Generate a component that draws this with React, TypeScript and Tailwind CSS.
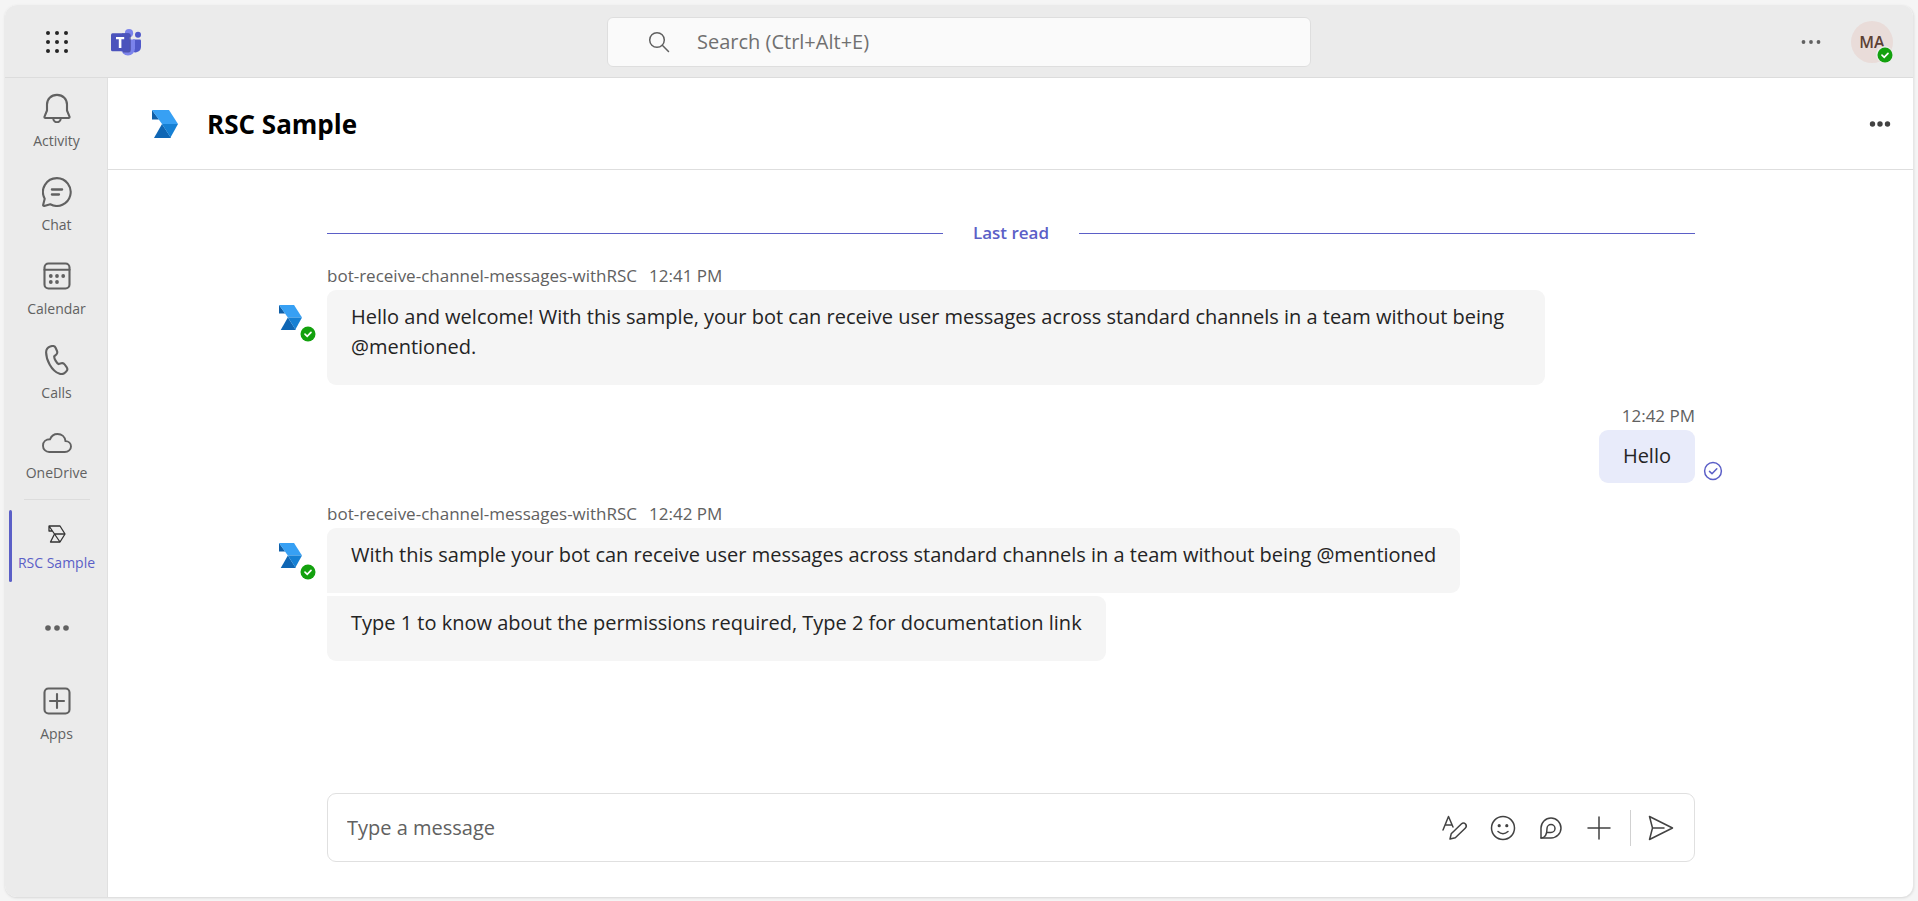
import type { ReactNode } from "react";

const font = "font-['Open_Sans','Noto_Sans',sans-serif]";

function BotLogo({ small = false }: { small?: boolean }) {
  return (
    <svg width={small ? 23 : 26} height={small ? 25 : 28} viewBox="0 0 26 28" aria-hidden="true">
      <path d="M0 0L7 9.500H0Z" fill="#0f5fa8" />
      <path d="M0 0H17L26 14H10Z" fill="#37a0f4" />
      <path d="M10 14L19 28H2Z" fill="#0f66b4" />
      <path d="M10 14H26L18.500 27.500Z" fill="#1680d4" />
    </svg>
  );
}

function TeamsLogo() {
  return (
    <svg width="30" height="27" viewBox="0 0 30 27" aria-hidden="true">
      <circle cx="27" cy="5.800" r="3" fill="#5059c9" />
      <path d="M22 10.500H29Q30 10.500 30 11.500V18A5.500 5.500 0 0 1 22 22.800Z" fill="#5059c9" />
      <circle cx="18" cy="4.200" r="4.100" fill="#7b83eb" />
      <path d="M10 10.500H24V19.500A7 7 0 0 1 10 19.500Z" fill="#7b83eb" />
      <path d="M11 4.300H17.500Q19.800 4.300 19.800 6.500V21Q19.800 23.500 17.500 23.500H12Z" fill="#383c8c" opacity="0.65" />
      <rect y="4.300" width="18.500" height="18" rx="1.500" fill="#4b53bc" />
      <path d="M5 8H13.200V10.200H10.400V19H7.800V10.200H5Z" fill="#fff" />
    </svg>
  );
}

function Presence() {
  return (
    <svg width="16" height="16" viewBox="0 0 16 16" role="img" aria-label="Available">
      <circle cx="8" cy="8" r="7.500" fill="#13a10e" />
      <path d="M5 8.200L7.200 10.300L11 6.300" fill="none" stroke="#fff" strokeWidth="1.700" strokeLinecap="round" />
    </svg>
  );
}

function Dots({ gap, r }: { gap: number; r: number }) {
  return (
    <svg width="30" height="12" viewBox="0 0 30 12" fill="currentColor" aria-hidden="true">
      <circle cx={15 - gap} cy="6" r={r} />
      <circle cx="15" cy="6" r={r} />
      <circle cx={15 + gap} cy="6" r={r} />
    </svg>
  );
}

function Icon({ children, stroke = 2.1 }: { children: ReactNode; stroke?: number }) {
  return (
    <svg
      width="30"
      height="30"
      viewBox="0 0 30 30"
      fill="none"
      stroke="currentColor"
      strokeWidth={stroke}
      strokeLinejoin="round"
      strokeLinecap="round"
      aria-hidden="true"
    >
      {children}
    </svg>
  );
}

function RailItem({ label, children }: { label: string; children: ReactNode }) {
  return (
    <button type="button" className="flex w-full flex-col items-center gap-2 text-sm leading-5 text-[#616161]">
      {children}
      <span>{label}</span>
    </button>
  );
}

function Rail() {
  return (
    <nav className="flex w-[103px] shrink-0 flex-col border-r border-[#e0e0e0] bg-[#ebebeb] pl-px pt-[15px]">
      <div className="flex flex-col gap-[26px]">
        <RailItem label="Activity">
          <Icon>
            <path d="M15 1.900C8.900 1.900 5 6.200 5 11.500V17.500L2.500 23.600Q2.100 25 3.500 25H26.500Q27.900 25 27.500 23.600L25 17.500V11.500C25 6.200 21.100 1.900 15 1.900Z" />
            <path d="M11.300 25.500A3.700 3.700 0 0 0 18.700 25.500" />
          </Icon>
        </RailItem>
        <RailItem label="Chat">
          <Icon>
            <path d="M15 1.100A13.900 13.900 0 1 1 8.300 27.300L2.200 28.900Q.9 29 1.200 27.700L2.700 21.700A13.900 13.900 0 0 1 15 1.100Z" />
            <path d="M9.900 12.500H20.100M9.900 17.500H17" strokeWidth="2.300" />
          </Icon>
        </RailItem>
        <RailItem label="Calendar">
          <Icon>
            <rect x="2.500" y="2.500" width="25" height="25" rx="4" />
            <path d="M2.500 8.800H27.500" />
            <g fill="currentColor" stroke="none">
              <circle cx="8.800" cy="15" r="1.900" />
              <circle cx="15" cy="15" r="1.900" />
              <circle cx="21.200" cy="15" r="1.900" />
              <circle cx="8.800" cy="21" r="1.900" />
              <circle cx="15" cy="21" r="1.900" />
            </g>
          </Icon>
        </RailItem>
        <RailItem label="Calls">
          <Icon>
            <path d="M8.200 1.600L10 1.100C11.700 .7 13 1.400 13.700 3L15 6C15.500 7.200 15.200 8.600 14.300 9.500L12.200 11.400C12 13.500 14.600 18 16.600 19.100L19.300 18.300C20.600 17.900 21.900 18.400 22.700 19.500L24.600 22.100C25.600 23.500 25.500 25.300 24.200 26.500L22.900 27.700C21.500 29 19.500 29.400 17.700 28.800C9.300 26 4.100 14.500 4.100 7.300C4.200 4.600 5.600 2.400 8.200 1.600Z" />
          </Icon>
        </RailItem>
      </div>
      <div className="mt-7">
        <RailItem label="OneDrive">
          <svg width="30" height="24" viewBox="0 1 30 24" fill="none" stroke="currentColor" strokeWidth="1.900" aria-hidden="true">
            <path d="M7.200 22H22.800C26.300 22 29 19.500 29 16.500C29 13.500 26.500 11.200 23.500 11.100C23 7 19.800 4 15.500 4C12 4 9.300 6.100 8 9.300C4 9.300 1 11.900 1 15.700C1 19.300 3.700 22 7.200 22Z" />
          </svg>
        </RailItem>
      </div>
      <div className="mx-auto mt-4 h-px w-[66px] bg-[#dcdcdc]" />
      <div className="relative mt-[10px] flex h-[72px] items-center pt-[6px]">
        <span className="absolute left-[3px] top-0 h-full w-[3px] rounded-full bg-[#5b5fc7]" />
        <button type="button" className="flex w-full flex-col items-center gap-[10px] text-sm leading-5 text-[#5b5fc7]">
          <svg width="18" height="18" viewBox="0 0 18 18" fill="none" stroke="#333" strokeWidth="1.300" strokeLinejoin="round" aria-hidden="true">
            <path d="M1 1H12L17 9L12 17H2.500L6.500 9L1 1V6H4.500" />
            <path d="M6.500 9H17M6.500 9L12 17" />
          </svg>
          <span className="whitespace-nowrap">RSC Sample</span>
        </button>
      </div>
      <button type="button" aria-label="More apps" className="mt-10 flex w-full justify-center text-[#616161]">
        <Dots gap={9} r={2.8} />
      </button>
      <div className="mt-[52px]">
        <RailItem label="Apps">
          <Icon>
            <rect x="2.500" y="2.500" width="25" height="25" rx="4" />
            <path d="M15 8V22M8 15H22" />
          </Icon>
        </RailItem>
      </div>
    </nav>
  );
}

function TopBar() {
  return (
    <header className="grid h-[73px] shrink-0 grid-cols-[1fr_auto_1fr] items-center border-b border-[#dcdcdc] bg-[#ebebeb] pt-0.5">
      <div className="flex items-center gap-[42px] pl-10">
        <button type="button" aria-label="App launcher">
          <svg width="24" height="24" viewBox="0 0 24 24" fill="#242424" aria-hidden="true">
            {[3, 12, 21].map((y) => [3, 12, 21].map((x) => <circle key={x + "-" + y} cx={x} cy={y} r="2" />))}
          </svg>
        </button>
        <TeamsLogo />
      </div>
      <label className="flex h-[50px] w-[704px] items-center gap-[27px] rounded-md border border-[#dedede] bg-[#fafafa] pl-10">
        <svg width="22" height="22" viewBox="0 0 22 22" fill="none" stroke="#616161" strokeWidth="1.500" strokeLinecap="round" aria-hidden="true">
          <circle cx="9" cy="9" r="7.300" />
          <path d="M14.300 14.300L20.500 20.500" />
        </svg>
        <input
          type="text"
          aria-label="Search"
          placeholder="Search (Ctrl+Alt+E)"
          className="min-w-0 flex-1 bg-transparent text-xl outline-none placeholder:text-[#707070]"
        />
      </label>
      <div className="flex items-center justify-end gap-[25px] pr-5">
        <button type="button" aria-label="Settings and more" className="text-[#616161]">
          <Dots gap={7.5} r={1.9} />
        </button>
        <button
          type="button"
          aria-label="Account"
          className="relative flex size-[42px] items-center justify-center rounded-full bg-[#e9dcd9] text-base font-semibold text-[#5c4135]"
        >
          MA
          <span className="absolute bottom-0 right-0 rounded-full bg-[#ebebeb] pl-px pt-px">
            <Presence />
          </span>
        </button>
      </div>
    </header>
  );
}

function BotGroup({ time, messages }: { time: string; messages: string[] }) {
  return (
    <article>
      <p className="flex h-7 items-center gap-3 text-[17px] leading-6 text-[#616161]">
        <span>bot-receive-channel-messages-withRSC</span>
        <time>{time}</time>
      </p>
      <div className="-ml-12 flex items-start">
        <div className="relative w-12 shrink-0 pt-[15px]">
          <BotLogo small />
          <span className="absolute left-[21px] top-9">
            <Presence />
          </span>
        </div>
        <div className="flex max-w-[1218px] flex-col items-start gap-[3px]">
          {messages.map((m, i) => (
            <p
              key={m}
              className={
                "bg-[#f5f5f5] px-6 pb-[23px] pt-3 text-xl leading-[30px] text-[#242424] " +
                (messages.length === 1 ? "rounded-[9px]" : i === 0 ? "rounded-[9px] rounded-bl-none" : "rounded-[9px] rounded-tl-none")
              }
            >
              {m}
            </p>
          ))}
        </div>
      </div>
    </article>
  );
}

function Composer() {
  return (
    <form className="flex h-[69px] items-center rounded-[9px] border border-[#e0e0e0] pl-[19px] pr-[18px] text-[#424242]">
      <input
        type="text"
        aria-label="Type a message"
        placeholder="Type a message"
        className="min-w-0 flex-1 bg-transparent text-xl outline-none placeholder:text-[#616161]"
      />
      <div className="flex items-center gap-[18px]">
        <button type="button" aria-label="Format">
          <Icon stroke={1.5}>
            <path d="M3 17L8.500 3.500L13 14M5.200 12H12" />
            <path d="M10 26L11.200 20.800L21.300 11Q23.500 9 25.500 11Q27.300 13.200 25.200 15.300L15.300 24.800Z" />
          </Icon>
        </button>
        <button type="button" aria-label="Emoji">
          <Icon stroke={1.5}>
            <circle cx="15" cy="15" r="11.500" />
            <path d="M10 18.500Q15 23 20 18.500" />
            <circle cx="11.200" cy="12.700" r="1.600" fill="currentColor" stroke="none" />
            <circle cx="18.800" cy="12.700" r="1.600" fill="currentColor" stroke="none" />
          </Icon>
        </button>
        <button type="button" aria-label="Loop components">
          <Icon stroke={1.5}>
            <path d="M5 25V15A10 10 0 1 1 15 25Z" />
            <path d="M5 25Q11 25 11 15.500A4 4 0 1 1 15 19.500H11" />
          </Icon>
        </button>
        <button type="button" aria-label="Add">
          <Icon stroke={1.5}>
            <path d="M15 4V26M4 15H26" />
          </Icon>
        </button>
      </div>
      <span className="ml-4 h-9 w-px bg-[#d1d1d1]" />
      <button type="submit" aria-label="Send" className="ml-[15px]">
        <Icon stroke={1.5}>
          <path d="M3.500 3.500L26.500 15L3.500 26.500L6.500 15ZM6.500 15H18" />
        </Icon>
      </button>
    </form>
  );
}

export default function App() {
  return (
    <div className={"flex min-h-screen bg-[#f5f5f5] p-[5px] pb-1 pr-1 text-[#242424] " + font}>
      <div className="flex flex-1 flex-col overflow-hidden rounded-xl border-r border-[#e6e6e6] bg-white shadow-sm">
        <TopBar />
        <div className="flex flex-1">
          <Rail />
          <main className="flex min-w-0 flex-1 flex-col">
            <div className="flex h-[92px] shrink-0 items-center border-b border-[#dedede] pl-11 pr-[18px]">
              <BotLogo />
              <h1 className="ml-[29px] flex-1 pt-0.5 text-[26px] font-bold text-black">RSC Sample</h1>
              <button type="button" aria-label="More options" className="text-[#424242]">
                <Dots gap={7.5} r={2.7} />
              </button>
            </div>
            <div className="flex flex-1 flex-col pl-[219px] pr-[218px] pt-[51px]">
              <div className="flex items-center gap-[30px] text-[17px] font-semibold leading-6 text-[#5b5fc7]">
                <span className="h-px flex-1 bg-[#5b5fc7]" />
                Last read
                <span className="h-px flex-1 bg-[#5b5fc7]" />
              </div>
              <div className="mt-[17px]">
                <BotGroup
                  time="12:41 PM"
                  messages={[
                    "Hello and welcome! With this sample, your bot can receive user messages across standard channels in a team without being @mentioned.",
                  ]}
                />
              </div>
              <article className="mt-[17px] flex flex-col items-end">
                <time className="flex h-7 items-center text-[17px] leading-6 text-[#616161]">12:42 PM</time>
                <div className="relative rounded-[9px] bg-[#e8ebfa] px-6 pb-3 pt-[11px] text-xl leading-[30px]">
                  Hello
                  <svg className="absolute -right-7 bottom-[2px]" width="20" height="20" viewBox="0 0 20 20" fill="none" stroke="#5b5fc7" strokeWidth="1.500" strokeLinecap="round" strokeLinejoin="round" role="img" aria-label="Sent">
                    <circle cx="10" cy="10" r="8.400" />
                    <path d="M6.500 10.400L9 12.800L13.800 7.800" />
                  </svg>
                </div>
              </article>
              <div className="mt-[17px]">
                <BotGroup
                  time="12:42 PM"
                  messages={[
                    "With this sample your bot can receive user messages across standard channels in a team without being @mentioned",
                    "Type 1 to know about the permissions required, Type 2 for documentation link",
                  ]}
                />
              </div>
              <div className="mt-auto pb-[35px] pt-8">
                <Composer />
              </div>
            </div>
          </main>
        </div>
      </div>
    </div>
  );
}
